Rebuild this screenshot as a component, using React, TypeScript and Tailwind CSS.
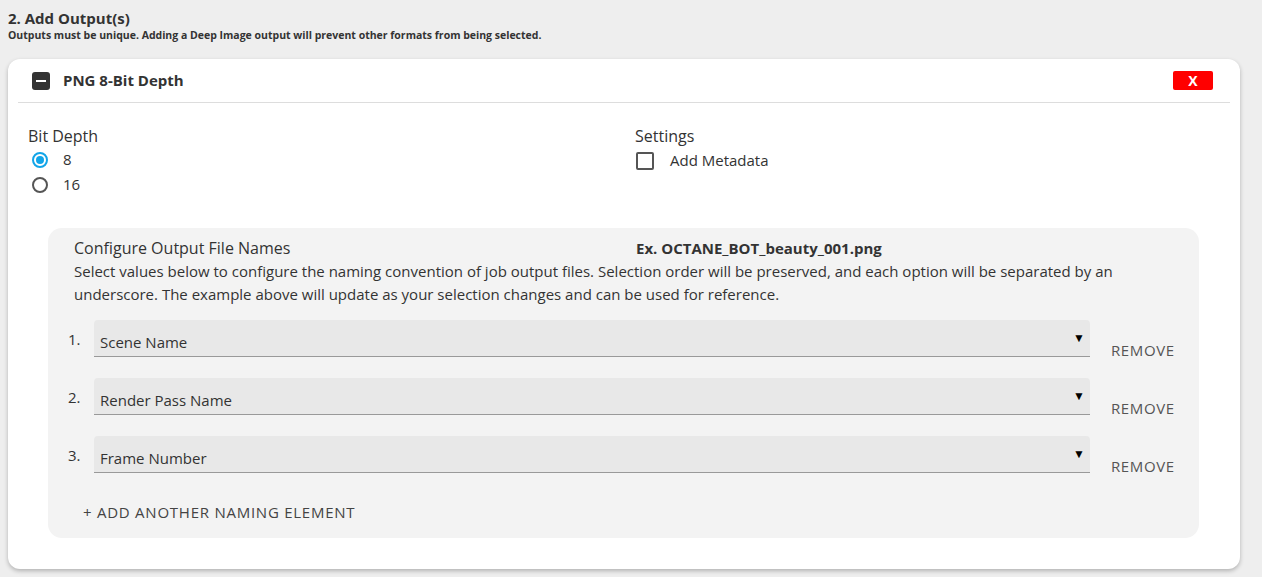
import { useState } from 'react'

const rows = ['Scene Name', 'Render Pass Name', 'Frame Number']

export default function App() {
  const [depth, setDepth] = useState('8')
  const [meta, setMeta] = useState(false)

  return (
    <div
      className="min-h-[577px] bg-[#eeeeee] px-2 pt-[9px] pb-2 text-[#333333]"
      style={{ fontFamily: '"Open Sans", "Noto Sans", sans-serif' }}
    >
      <h2 className="text-[15px] font-bold leading-[19px]">2. Add Output(s)</h2>
      <p className="text-[10.5px] font-bold leading-[14px]">
        Outputs must be unique. Adding a Deep Image output will prevent other formats from being selected.
      </p>

      <div className="mt-[17px] w-[1232px] rounded-[12px] bg-white pb-[31px] shadow-[0_2px_4px_rgba(0,0,0,0.25)]">
        <div className="mx-[10px] flex h-[44px] items-center justify-between border-b border-[#dddddd] pl-[14px] pr-[17px]">
          <div className="flex items-center">
            <span className="flex h-[18px] w-[18px] items-center justify-center rounded-[3px] bg-[#333333]">
              <span className="h-[2px] w-[10px] bg-white" />
            </span>
            <span className="ml-[13px] text-[15px] font-bold">PNG 8-Bit Depth</span>
          </div>
          <button className="flex h-[19px] w-[40px] items-center justify-center rounded-[2px] bg-[#ff0000] text-[14px] font-bold leading-none text-white">
            X
          </button>
        </div>

        <div className="grid grid-cols-[607px_1fr] px-5 pt-[23px]">
          <div>
            <div className="text-[16px] leading-[21px]">Bit Depth</div>
            {['8', '16'].map((v) => (
              <label key={v} className="flex h-[25px] cursor-pointer items-center text-[15px]" onClick={() => setDepth(v)}>
                <span
                  className={
                    depth === v
                      ? 'ml-[4px] flex h-[16px] w-[16px] items-center justify-center rounded-full border-2 border-[#12a5e8]'
                      : 'ml-[4px] flex h-[16px] w-[16px] items-center justify-center rounded-full border-2 border-[#555555]'
                  }
                >
                  {depth === v && <span className="h-[8px] w-[8px] rounded-full bg-[#12a5e8]" />}
                </span>
                <span className="ml-[15px]">{v}</span>
              </label>
            ))}
          </div>
          <div>
            <div className="text-[16px] leading-[21px]">Settings</div>
            <label className="mt-[1px] flex h-[25px] cursor-pointer items-center text-[15px]" onClick={() => setMeta(!meta)}>
              <span className="ml-[1px] flex h-[18px] w-[18px] items-center justify-center rounded-[2px] border-2 border-[#555555]">
                {meta && <span className="h-[8px] w-[8px] bg-[#555555]" />}
              </span>
              <span className="ml-[16px]">Add Metadata</span>
            </label>
          </div>
        </div>

        <div className="mt-[31px] ml-[40px] w-[1151px] rounded-[14px] bg-[#f3f3f3] pt-[9px] pb-[14px] pl-[26px] pr-[20px]">
          <div className="flex text-[16px] leading-[22px]">
            <span className="w-[562px]">Configure Output File Names</span>
            <span className="text-[15px] font-bold">Ex. OCTANE_BOT_beauty_001.png</span>
          </div>
          <p className="mt-[1px] text-[15px] leading-[23px]">
            Select values below to configure the naming convention of job output files. Selection order will be preserved, and each option will be separated by an underscore. The example above will update as your selection changes and can be used for reference.
          </p>

          <div className="mt-[14px] -ml-[6px] flex flex-col gap-[21px]">
            {rows.map((r, i) => (
              <div key={r} className="flex h-[37px] items-start">
                <span className="w-[26px] pt-[9px] text-[15px] leading-[20px]">{i + 1}.</span>
                <div className="flex h-[37px] w-[996px] items-center justify-between rounded-t-[4px] border-b border-[#999999] bg-[#e8e8e8] pl-[6px] pr-[5px]">
                  <span className="pt-[8px] text-[15px]">{r}</span>
                  <span className="text-[12px] text-black">▼</span>
                </div>
                <span className="ml-[21px] pt-[20px] text-[15px] leading-[20px] tracking-[0.6px] text-[#555555]">REMOVE</span>
              </div>
            ))}
          </div>

          <div className="mt-[28px] ml-[9px] text-[15px] tracking-[0.75px] text-[#444444]">+ ADD ANOTHER NAMING ELEMENT</div>
        </div>
      </div>
    </div>
  )
}
